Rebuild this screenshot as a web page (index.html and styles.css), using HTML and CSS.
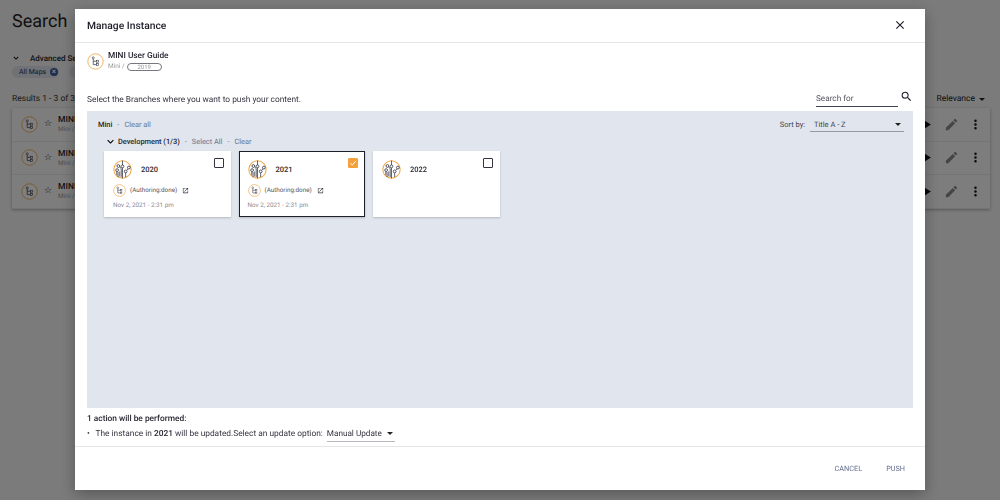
FILE: index.html
```html
<!DOCTYPE html>
<html lang="en">
<head>
<meta charset="utf-8">
<title>Manage Instance</title>
<link rel="stylesheet" href="styles.css">
</head>
<body>
<svg class="defs" width="0" height="0" aria-hidden="true">
  <defs>
    <symbol id="map" viewBox="0 0 30 30">
      <circle cx="15" cy="15" r="13.6" fill="#fff" stroke="#efa648" stroke-width="1.5"/>
      <path d="M11 8.5V20.5H17M11 14.5H17" fill="none" stroke="#3a3a48" stroke-width="1.3"/>
      <circle cx="11" cy="8.5" r="1.9" fill="#fff" stroke="#3a3a48" stroke-width="1.1"/>
      <rect x="17" y="12.8" width="3.6" height="3.4" fill="#fff" stroke="#3a3a48" stroke-width="1.1"/>
      <rect x="17" y="18.8" width="3.6" height="3.4" fill="#fff" stroke="#3a3a48" stroke-width="1.1"/>
    </symbol>
    <symbol id="branch" viewBox="0 0 30 30">
      <circle cx="15" cy="15" r="13.7" fill="#fff" stroke="#efa648" stroke-width="1.6"/>
      <path d="M15 1V8M15 12V29M11 11L13 14V27M8 19V27M6 18V24M20 20V27M22 16L25 13" fill="none" stroke="#33333f" stroke-width="1.2"/>
      <path d="M10.5 26V18" fill="none" stroke="#8c8c98" stroke-width="2.2"/>
      <circle cx="8.5" cy="9.5" r="2.2" fill="#fff" stroke="#33333f" stroke-width="1.3"/>
      <circle cx="15" cy="10" r="2.2" fill="#fff" stroke="#33333f" stroke-width="1.3"/>
      <circle cx="6.5" cy="16" r="2.2" fill="#fff" stroke="#33333f" stroke-width="1.3"/>
      <circle cx="20" cy="18" r="2.2" fill="#fff" stroke="#33333f" stroke-width="1.3"/>
      <circle cx="25" cy="12" r="2.2" fill="#fff" stroke="#33333f" stroke-width="1.3"/>
    </symbol>
    <symbol id="open" viewBox="0 0 24 24">
      <path d="M19 19H5V5h7V3H5a2 2 0 0 0-2 2v14a2 2 0 0 0 2 2h14a2 2 0 0 0 2-2v-7h-2v7zM14 3v2h3.6l-9.8 9.8 1.4 1.4L19 6.4V10h2V3h-7z" fill="#33333f"/>
    </symbol>
  </defs>
</svg>

<div class="page">
  <h1 class="page-title">Search</h1>
  <div class="adv">
    <svg class="chev" viewBox="0 0 24 24"><path d="M7.4 8.6 12 13.2l4.6-4.6L18 10l-6 6-6-6z"/></svg>
    <span class="adv-label">Advanced Search</span>
  </div>
  <div class="chips">
    <span class="chip">All Maps <b class="chip-x">×</b></span>
    <span class="chip">Filters</span>
  </div>
  <div class="results-bar">
    <span class="results-text">Results 1 - 3 of 3</span>
    <span class="sort">Relevance <i class="caret"></i></span>
  </div>
  <div class="rows">
    <div class="row">
      <svg class="row-icon"><use href="#map"/></svg><span class="star">☆</span>
      <div class="row-text"><strong>MINI</strong><small>Mini /</small></div>
      <div class="row-actions">
        <svg class="act" viewBox="0 0 24 24"><path d="M8 5v14l11-7z" fill="#111"/></svg>
        <svg class="act" viewBox="0 0 24 24"><path d="M3 17.2V21h3.8L17.8 9.9l-3.7-3.7zM20.7 7a1 1 0 0 0 0-1.4l-2.3-2.3a1 1 0 0 0-1.4 0l-1.8 1.8 3.7 3.7z" fill="#8a8a8a"/></svg>
        <svg class="act" viewBox="0 0 24 24"><path d="M12 8a2 2 0 1 0 0-4 2 2 0 0 0 0 4zm0 2a2 2 0 1 0 0 4 2 2 0 0 0 0-4zm0 6a2 2 0 1 0 0 4 2 2 0 0 0 0-4z" fill="#111"/></svg>
      </div>
    </div>
    <div class="row">
      <svg class="row-icon"><use href="#map"/></svg><span class="star">☆</span>
      <div class="row-text"><strong>MINI</strong><small>Mini /</small></div>
      <div class="row-actions">
        <svg class="act" viewBox="0 0 24 24"><path d="M8 5v14l11-7z" fill="#111"/></svg>
        <svg class="act" viewBox="0 0 24 24"><path d="M3 17.2V21h3.8L17.8 9.9l-3.7-3.7zM20.7 7a1 1 0 0 0 0-1.4l-2.3-2.3a1 1 0 0 0-1.4 0l-1.8 1.8 3.7 3.7z" fill="#8a8a8a"/></svg>
        <svg class="act" viewBox="0 0 24 24"><path d="M12 8a2 2 0 1 0 0-4 2 2 0 0 0 0 4zm0 2a2 2 0 1 0 0 4 2 2 0 0 0 0-4zm0 6a2 2 0 1 0 0 4 2 2 0 0 0 0-4z" fill="#111"/></svg>
      </div>
    </div>
    <div class="row">
      <svg class="row-icon"><use href="#map"/></svg><span class="star">☆</span>
      <div class="row-text"><strong>MINI</strong><small>Mini /</small></div>
      <div class="row-actions">
        <svg class="act" viewBox="0 0 24 24"><path d="M8 5v14l11-7z" fill="#111"/></svg>
        <svg class="act" viewBox="0 0 24 24"><path d="M3 17.2V21h3.8L17.8 9.9l-3.7-3.7zM20.7 7a1 1 0 0 0 0-1.4l-2.3-2.3a1 1 0 0 0-1.4 0l-1.8 1.8 3.7 3.7z" fill="#8a8a8a"/></svg>
        <svg class="act" viewBox="0 0 24 24"><path d="M12 8a2 2 0 1 0 0-4 2 2 0 0 0 0 4zm0 2a2 2 0 1 0 0 4 2 2 0 0 0 0-4zm0 6a2 2 0 1 0 0 4 2 2 0 0 0 0-4z" fill="#111"/></svg>
      </div>
    </div>
  </div>
</div>

<div class="scrim"></div>

<section class="modal">
  <header class="modal-head">
    <h2 class="modal-title">Manage Instance</h2>
    <svg class="close" viewBox="0 0 24 24"><path d="M19 6.4 17.6 5 12 10.6 6.4 5 5 6.4 10.6 12 5 17.6 6.4 19 12 13.4 17.6 19 19 17.6 13.4 12z"/></svg>
  </header>
  <div class="modal-body">
    <div class="guide">
      <svg class="guide-icon"><use href="#map"/></svg>
      <div class="guide-text">
        <strong class="guide-name">MINI User Guide</strong>
        <div class="guide-meta">Mini / <span class="pill">2019</span></div>
      </div>
    </div>
    <div class="select-row">
      <p class="select-text">Select the Branches where you want to push your content.</p>
      <div class="search">
        <span class="search-field">Search for</span>
        <svg class="search-icon" viewBox="0 0 24 24"><path d="M15.5 14h-.79l-.28-.27A6.47 6.47 0 0 0 16 9.5 6.5 6.5 0 1 0 9.5 16c1.61 0 3.09-.59 4.23-1.57l.27.28v.79l5 4.99L20.49 19l-4.99-5zm-6 0C7.01 14 5 11.99 5 9.5S7.01 5 9.5 5 14 7.01 14 9.5 11.99 14 9.5 14z"/></svg>
      </div>
    </div>
    <div class="panel">
      <div class="panel-top">
        <div class="crumb"><b>Mini</b><span class="dot">-</span><span class="link">Clear all</span></div>
        <div class="sortby">
          <span class="sortby-label">Sort by:</span>
          <span class="sortby-field">Title A - Z <i class="caret"></i></span>
        </div>
      </div>
      <div class="crumb crumb-dev">
        <svg class="chev" viewBox="0 0 24 24"><path d="M7.4 8.6 12 13.2l4.6-4.6L18 10l-6 6-6-6z"/></svg>
        <b>Development (1/3)</b><span class="dot">-</span><span class="link">Select All</span><span class="dot">-</span><span class="link">Clear</span>
      </div>
      <div class="cards">
        <article class="card">
          <div class="card-head">
            <svg class="card-icon"><use href="#branch"/></svg>
            <span class="card-title">2020</span>
            <span class="check"></span>
          </div>
          <div class="card-status">
            <svg class="status-icon"><use href="#map"/></svg>
            <span class="status-text">(Authoring:done)</span>
            <svg class="open-icon"><use href="#open"/></svg>
          </div>
          <div class="card-date">Nov 2, 2021 - 2:31 pm</div>
        </article>
        <article class="card card-selected">
          <div class="card-head">
            <svg class="card-icon"><use href="#branch"/></svg>
            <span class="card-title">2021</span>
            <span class="check check-on"><svg viewBox="0 0 24 24"><path d="M4 12.5 10 18 20 6.5" fill="none" stroke="#fff" stroke-width="3"/></svg></span>
          </div>
          <div class="card-status">
            <svg class="status-icon"><use href="#map"/></svg>
            <span class="status-text">(Authoring:done)</span>
            <svg class="open-icon"><use href="#open"/></svg>
          </div>
          <div class="card-date">Nov 2, 2021 - 2:31 pm</div>
        </article>
        <article class="card">
          <div class="card-head">
            <svg class="card-icon"><use href="#branch"/></svg>
            <span class="card-title">2022</span>
            <span class="check"></span>
          </div>
        </article>
      </div>
    </div>
    <div class="actions">
      <strong class="actions-title">1 action will be performed:</strong>
      <div class="action-line">
        <span class="bullet">•</span>
        <span>The instance in <b>2021</b> will be updated.Select an update option:</span>
        <span class="update-select">Manual Update <i class="caret"></i></span>
      </div>
    </div>
  </div>
  <footer class="modal-foot">
    <span class="btn">CANCEL</span>
    <span class="btn">PUSH</span>
  </footer>
</section>
</body>
</html>
```
FILE: styles.css
```css
* { box-sizing: border-box; }
html, body { margin: 0; height: 100%; }
body {
  font-family: Roboto, "Liberation Sans", sans-serif;
  background: #f7f7f7;
  color: #1f1f2b;
  overflow: hidden;
  text-rendering: geometricPrecision;
}
.defs { position: absolute; }

/* Background page */
.page { padding: 9px 0 0 12px; }
.page-title { margin: 0; font-size: 18px; line-height: 26px; font-weight: 400; color: #222; }
.adv { display: flex; align-items: center; gap: 9px; margin-top: 15px; height: 16px; }
.adv .chev { width: 10px; height: 10px; margin-left: -1px; }
.adv-label { font-size: 8px; font-weight: 500; }
.chips { display: flex; gap: 10px; margin-top: 0; }
.chip { background: #e0e4ee; border-radius: 8px; font-size: 7px; line-height: 12px; padding: 0 1px 0 7px; color: #333; white-space: nowrap; }
.chip-x { display: inline-block; width: 8px; height: 8px; line-height: 8px; background: #3d5a98; color: #fff; border-radius: 50%; text-align: center; font-size: 8px; margin-left: 2px; }
.results-bar { display: flex; justify-content: space-between; align-items: center; margin-top: 14px; height: 14px; }
.results-text { font-size: 8.5px; color: #333; }
.sort { font-size: 8.5px; color: #222; margin-right: 15px; display: flex; align-items: center; gap: 4px; }
.rows { margin-top: 2px; margin-right: 10px; box-shadow: 0 1px 3px rgba(0,0,0,.3); }
.row { height: 33.5px; display: flex; align-items: center; background: #fbfbfb; border-bottom: 1px solid #e9e9e9; padding-left: 9px; }
.row-icon { width: 17px; height: 17px; }
.star { font-size: 9px; margin-left: 6px; color: #111; }
.row-text { display: flex; flex-direction: column; margin-left: 6px; white-space: nowrap; }
.row-text strong { font-size: 8.5px; font-weight: 500; }
.row-text small { font-size: 6.5px; color: #999; }
.row-actions { margin-left: auto; display: flex; gap: 9.5px; padding-right: 7px; }
.act { width: 15px; height: 15px; }

.scrim { position: fixed; inset: 0; background: rgba(0,0,0,.5); }

/* Modal */
.modal {
  position: fixed; left: 75px; top: 9px; width: 850px; height: 481px;
  background: #fff; display: flex; flex-direction: column;
  box-shadow: 0 4px 14px rgba(0,0,0,.3);
}
.modal-head { height: 34px; flex: none; display: flex; align-items: center; justify-content: space-between; padding: 0 18px 1px 12px; border-bottom: 1px solid #e6e6e6; }
.modal-title { margin: 0; font-size: 10.3px; font-weight: 500; color: #1f1f2b; }
.close { width: 14px; height: 14px; fill: #1f1f2b; }
.modal-body { flex: 1; display: flex; flex-direction: column; padding: 0 12px; min-height: 0; }

.guide { display: flex; align-items: flex-start; gap: 4px; padding-top: 8px; height: 45px; }
.guide-icon { width: 17px; height: 17px; margin-top: 2px; }
.guide-text { display: flex; flex-direction: column; }
.guide-name { font-size: 8.3px; line-height: 11px; font-weight: 500; color: #1f1f2b; }
.guide-meta { font-size: 6.5px; line-height: 9px; color: #999; margin-top: 0; display: flex; align-items: center; gap: 2px; }
.pill { display: inline-block; width: 35px; height: 8px; line-height: 7px; border: 1px solid #77777f; border-radius: 5px; text-align: center; font-size: 6px; }

.select-row { display: flex; justify-content: space-between; align-items: flex-end; height: 23px; }
.select-text { margin: 0 0 5px; font-size: 8.35px; line-height: 12px; color: #33333f; }
.search { display: flex; align-items: center; gap: 2px; margin-bottom: 3px; }
.search-field { width: 82px; height: 15px; line-height: 14px; font-size: 8.2px; color: #55555f; border-bottom: 1px solid #44444f; }
.search-icon { width: 13px; height: 13px; fill: #1f1f2b; margin-bottom: 5px; }

.panel { background: #e1e5ed; height: 297px; flex: none; padding: 0 9px 0 11px; }
.panel-top { display: flex; justify-content: space-between; align-items: center; height: 24px; padding-top: 3px; }
.crumb { display: flex; align-items: center; font-size: 7.4px; color: #1f1f2b; }
.crumb b { font-weight: 500; }
.dot { margin: 0 5px; color: #7a8299; }
.link { color: #6b7693; }
.crumb-dev { height: 12px; padding-left: 6px; }
.crumb-dev .chev { width: 13px; height: 13px; margin-right: 1px; }
.sortby { display: flex; align-items: center; gap: 5px; }
.sortby-label { font-size: 7.5px; color: #44444f; }
.sortby-field { display: flex; justify-content: space-between; align-items: center; width: 94px; height: 15px; font-size: 7.5px; padding: 0 3px 0 4px; border-bottom: 1px solid #9a9aa6; color: #44444f; }

.cards { display: flex; gap: 8px; margin-top: 4px; padding-left: 6px; }
.card { width: 126.5px; height: 66px; background: #fff; box-shadow: 0 1px 2px rgba(0,0,0,.2); padding: 9px 7px 0 9px; }
.card-selected { border: 1px solid #1f1f2b; padding: 8px 6px 0 8px; }
.card-head { display: flex; align-items: flex-start; height: 21px; }
.card-icon { width: 19px; height: 19px; }
.card-title { font-size: 7.5px; font-weight: 500; margin: 5px 0 0 9px; line-height: 10px; }
.check { width: 10px; height: 10px; border: 1.3px solid #33333f; border-radius: 1px; margin: -2px 0 0 auto; }
.check-on { background: #f5a03a; border-color: #f5a03a; display: flex; }
.check-on svg { width: 100%; height: 100%; }
.card-status { display: flex; align-items: center; margin-top: 3px; height: 12px; }
.status-icon { width: 13px; height: 13px; }
.status-text { font-size: 6.3px; color: #55555f; margin-left: 4px; }
.open-icon { width: 7px; height: 7px; margin-left: 5px; }
.card-date { font-size: 6.3px; color: #8b8b93; margin-top: 5px; line-height: 9px; }

.actions { padding-top: 5px; }
.actions-title { display: block; font-size: 8.35px; line-height: 12px; font-weight: 500; color: #1f1f2b; }
.action-line { display: flex; align-items: center; font-size: 8.35px; color: #33333f; height: 16px; margin-top: 1px; }
.action-line b { font-weight: 500; color: #1f1f2b; }
.bullet { width: 8.5px; }
.update-select { display: flex; align-items: center; gap: 5px; width: 68px; height: 15px; margin-left: 4px; font-size: 8.2px; border-bottom: 1px solid #b8b8be; color: #33333f; }

.modal-foot { height: 44px; flex: none; display: flex; justify-content: flex-end; align-items: center; gap: 24px; padding: 0 20px 0 0; border-top: 1px solid #e6e6e6; }
.btn { font-size: 7.3px; color: #65708f; }

.caret { display: inline-block; width: 0; height: 0; border-left: 3px solid transparent; border-right: 3px solid transparent; border-top: 3px solid #222; }
```
